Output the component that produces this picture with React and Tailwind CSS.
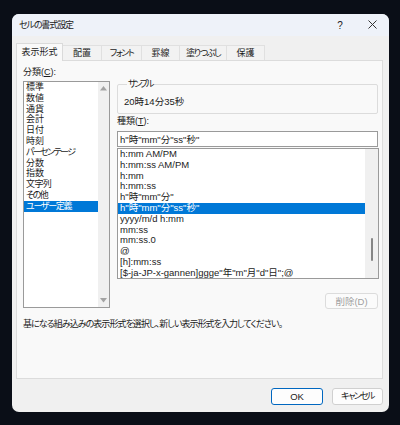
const categories = [
  { label: "標準", t: "" },
  { label: "数値", t: "" },
  { label: "通貨", t: "" },
  { label: "会計", t: "" },
  { label: "日付", t: "" },
  { label: "時刻", t: "" },
  { label: "パーセンテージ", t: "tracking-[-1.6px]" },
  { label: "分数", t: "" },
  { label: "指数", t: "" },
  { label: "文字列", t: "tracking-[-0.6px]" },
  { label: "その他", t: "tracking-[-1.5px]" },
  { label: "ユーザー定義", t: "tracking-[-1.3px]" },
];

const formats = [
  "h:mm AM/PM",
  "h:mm:ss AM/PM",
  "h:mm",
  "h:mm:ss",
  'h"時"mm"分"',
  'h"時"mm"分"ss"秒"',
  "yyyy/m/d h:mm",
  "mm:ss",
  "mm:ss.0",
  "@",
  "[h]:mm:ss",
  '[$-ja-JP-x-gannen]ggge"年"m"月"d"日";@',
];

const tabs = [
  { label: "配置", w: "w-[39px]", t: "" },
  { label: "フォント", w: "w-[40px]", t: "tracking-[-1.5px]" },
  { label: "罫線", w: "w-[38px]", t: "" },
  { label: "塗りつぶし", w: "w-[47px]", t: "tracking-[-1.4px]" },
  { label: "保護", w: "w-[38px]", t: "" },
];

function Arrow({ down }) {
  return (
    <svg width="7" height="5" viewBox="0 0 7 5">
      <path d={down ? "M0 0h7L3.5 4.5z" : "M0 4.5h7L3.5 0z"} fill="#a3a3a3" />
    </svg>
  );
}

export default function App() {
  return (
    <div className="w-[400px] h-[425px] bg-[#0a0e17] pt-[14px] pl-[12px] text-[9px] leading-[11px] text-[#1b1b1b] font-['Liberation_Sans','Noto_Sans_CJK_JP',sans-serif] [font-feature-settings:'palt'_1]">
      <div className="w-[377px] h-[398px] rounded-[7px] overflow-hidden bg-[#f0f0f0] flex flex-col">
        {/* title bar */}
        <div className="h-[22px] bg-[#eef2f9] flex items-center shrink-0">
          <span className="pl-[7px] pt-[1px] tracking-[-1.1px]">セルの書式設定</span>
          <div className="ml-auto flex pr-[1px]">
            <span className="w-[32px] text-center text-[10px]">?</span>
            <span className="w-[32px] flex justify-center">
              <svg width="9" height="9" viewBox="0 0 9 9">
                <path d="M0.5 0.5l8 8M8.5 0.5l-8 8" stroke="#333" strokeWidth="1" />
              </svg>
            </span>
          </div>
        </div>

        <div className="pl-[4px] pt-[7px]">
          {/* tabs */}
          <div className="h-[17px] flex items-end">
            <div className="w-[47px] h-[18px] -mb-px relative z-10 bg-[#f9f9f9] border-l border-t border-r border-[#dadada] flex items-center justify-center">
              表示形式
            </div>
            {tabs.map((t) => (
              <div
                key={t.label}
                className={`${t.w} ${t.t} h-[15px] bg-[#f2f2f2] border-t border-r border-[#e0e0e0] flex items-center justify-center`}
              >
                {t.label}
              </div>
            ))}
          </div>

          {/* panel */}
          <div className="w-[367px] h-[319px] border border-[#dcdcdc] bg-[#f9f9f9] flex flex-col">
            <div className="flex pl-[6px]">
              {/* left column */}
              <div className="flex flex-col pt-[6px]">
                <span>
                  分類(<span className="underline">C</span>):
                </span>
                <div className="mt-[3px] w-[87px] h-[227px] border border-[#9a9a9a] bg-white flex">
                  <div className="w-[74px] flex flex-col">
                    {categories.map((c) => (
                      <div
                        key={c.label}
                        className={`h-[10.8px] leading-[10.8px] pl-[2px] whitespace-nowrap ${c.t} ${
                          c.label === "ユーザー定義" ? "bg-[#0078d7] text-white" : ""
                        }`}
                      >
                        {c.label}
                      </div>
                    ))}
                  </div>
                  <div className="w-[11px] bg-[#f0f0f0] flex flex-col items-center justify-between py-[4px]">
                    <Arrow />
                    <Arrow down />
                  </div>
                </div>
              </div>

              {/* right column */}
              <div className="flex flex-col ml-[7px] mt-[18px] w-[262px]">
                <fieldset className="border border-[#dcdcdc] rounded-[2px] pl-[6px] pt-[6px] pb-[5px] mr-[1px]">
                  <legend className="ml-[3px] px-[1px] tracking-[-2.2px]">サンプル</legend>
                  <span className="text-[9.5px]">20時14分35秒</span>
                </fieldset>
                <span className="mt-[2px]">
                  種類(<span className="underline">T</span>):
                </span>
                <div className="mt-[4px] h-[16px] border border-[#9a9a9a] bg-white pl-[2px] flex items-center mr-[1px] text-[9.5px]">
                  {'h"時"mm"分"ss"秒"'}
                </div>
                <div className="mt-[1px] h-[131px] border border-[#9a9a9a] bg-white flex text-[9.5px]">
                  <div className="flex-1 flex flex-col">
                    {formats.map((f, i) => (
                      <div
                        key={f}
                        className={`h-[10.8px] leading-[10.8px] pl-[2px] whitespace-nowrap ${
                          i === 5 ? "bg-[#0078d7] text-white" : ""
                        }`}
                      >
                        {f}
                      </div>
                    ))}
                  </div>
                  <div className="w-[13px] bg-[#f0f0f0] flex justify-center pt-[89px]">
                    <div className="w-[2px] h-[23px] rounded-full bg-[#858585]" />
                  </div>
                </div>
                <button className="self-end mt-[14px] mr-[1px] w-[53px] h-[16px] border border-[#dcdcdc] rounded-[3px] bg-[#fbfbfb] text-[#a0a0a0] text-[9.5px]">
                  削除(D)
                </button>
              </div>
            </div>
            <p className="pl-[6px] mt-[10px] tracking-[-0.95px]">
              基になる組み込みの表示形式を選択し、新しい表示形式を入力してください。
            </p>
          </div>
        </div>

        {/* footer */}
        <div className="flex justify-end gap-[9px] pr-[6px] mt-[9px]">
          <button className="w-[52px] h-[17px] rounded-[3px] border border-[#0067c0] bg-[#fdfdfd] text-[9.5px]">
            OK
          </button>
          <button className="w-[51px] h-[17px] rounded-[3px] border border-[#d0d0d0] bg-[#fdfdfd] tracking-[-1.6px]">
            キャンセル
          </button>
        </div>
      </div>
    </div>
  );
}
